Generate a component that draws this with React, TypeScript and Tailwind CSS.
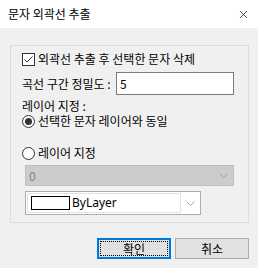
import { X } from 'lucide-react'

const font = { fontFamily: '"Noto Sans CJK KR", "Noto Sans", sans-serif' }

const Chevron = ({ color }: { color: string }) => (
  <svg width="9" height="5" viewBox="0 0 9 5" fill="none">
    <path d="M0.5 0.5 L4.5 4.5 L8.5 0.5" stroke={color} strokeWidth="1" />
  </svg>
)

const Radio = ({ checked }: { checked?: boolean }) => (
  <div className="w-[13px] h-[13px] rounded-full border border-[#333333] bg-white flex items-center justify-center shrink-0">
    {checked && <div className="w-[7px] h-[7px] rounded-full bg-[#333333]" />}
  </div>
)

export default function App() {
  return (
    <div
      className="w-[258px] h-[268px] bg-[#f0f0f0] text-[12px] leading-[14px] text-black overflow-hidden"
      style={font}
    >
      {/* title bar */}
      <div className="h-[28px] bg-white flex items-center justify-between pl-[8px] pr-[8px]">
        <span className="text-[12px]">문자 외곽선 추출</span>
        <X size={13} strokeWidth={1.2} className="text-black" />
      </div>

      {/* group box */}
      <div className="mt-[17px] ml-[10px] w-[239px] h-[178px] border border-[#dcdcdc] flex flex-col">
        <div className="mt-[4px] h-[18px] flex items-center pl-[11px]">
          <div className="w-[13px] h-[13px] border border-[#333333] bg-white flex items-center justify-center shrink-0">
            <svg width="11" height="11" viewBox="0 0 11 11" fill="none">
              <path d="M1.5 5.5 L4 8 L9.5 2.5" stroke="#333333" strokeWidth="1" />
            </svg>
          </div>
          <span className="ml-[3px]">외곽선 추출 후 선택한 문자 삭제</span>
        </div>

        <div className="mt-[4px] h-[23px] flex items-center pl-[11px]">
          <span className="w-[94px]">곡선 구간 정밀도 :</span>
          <div className="w-[118px] h-[23px] border border-[#7a7a7a] bg-white flex items-center pl-[3px]">5</div>
        </div>

        <div className="mt-[4px] h-[14px] flex items-center pl-[11px]">레이어 지정 :</div>

        <div className="h-[14px] mt-[1px] flex items-center pl-[11px]">
          <Radio checked />
          <span className="ml-[3px]">선택한 문자 레이어와 동일</span>
        </div>

        <div className="h-[14px] mt-[18px] flex items-center pl-[11px]">
          <Radio />
          <span className="ml-[3px]">레이어 지정</span>
        </div>

        <div className="mt-[5px] ml-[14px] w-[209px] h-[21px] bg-[#cccccc] border border-[#bfbfbf] flex items-center justify-between pl-[3px] pr-[5px] text-[#838383]">
          <span>0</span>
          <Chevron color="#a0a0a0" />
        </div>

        <div className="mt-[5px] ml-[14px] w-[176px] h-[24px] bg-white border border-[#adadad] flex items-center p-[1px]">
          <div className="flex-1 h-full border border-[#e3e3e3] flex items-center pl-[3px]">
            <div className="w-[39px] h-[14px] border border-black bg-white" />
            <span className="ml-[2px]" style={{ fontFamily: '"Noto Sans", sans-serif' }}>ByLayer</span>
          </div>
          <div className="w-[18px] flex justify-center">
            <Chevron color="#a0a0a0" />
          </div>
        </div>
      </div>

      {/* buttons */}
      <div className="mt-[15px] flex justify-end gap-[4px] pr-[9px]">
        <div className="w-[74px] h-[21px] border-2 border-[#0078d7] bg-[#e1e1e1] p-[1px]">
          <div className="w-full h-full border border-dotted border-black flex items-center justify-center">확인</div>
        </div>
        <div className="w-[74px] h-[21px] border border-[#adadad] bg-[#e1e1e1] flex items-center justify-center">취소</div>
      </div>
    </div>
  )
}
